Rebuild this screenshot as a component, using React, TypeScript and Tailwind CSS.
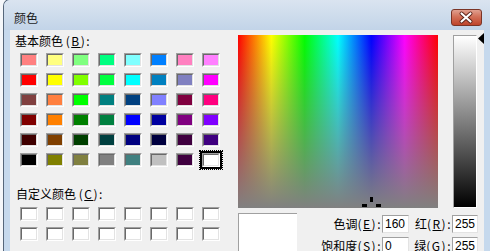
import React from "react";

const basicColors = [
  "bg-[#ff8080]", "bg-[#ffff80]", "bg-[#80ff80]", "bg-[#00ff80]", "bg-[#80ffff]", "bg-[#0080ff]", "bg-[#ff80c0]", "bg-[#ff80ff]",
  "bg-[#ff0000]", "bg-[#ffff00]", "bg-[#80ff00]", "bg-[#00ff40]", "bg-[#00ffff]", "bg-[#0080c0]", "bg-[#8080c0]", "bg-[#ff00ff]",
  "bg-[#804040]", "bg-[#ff8040]", "bg-[#00ff00]", "bg-[#008080]", "bg-[#004080]", "bg-[#8080ff]", "bg-[#800040]", "bg-[#ff0080]",
  "bg-[#800000]", "bg-[#ff8000]", "bg-[#008000]", "bg-[#008040]", "bg-[#0000ff]", "bg-[#0000a0]", "bg-[#800080]", "bg-[#8000ff]",
  "bg-[#400000]", "bg-[#804000]", "bg-[#004000]", "bg-[#004040]", "bg-[#000080]", "bg-[#000040]", "bg-[#400040]", "bg-[#400080]",
  "bg-[#000000]", "bg-[#808000]", "bg-[#808040]", "bg-[#808080]", "bg-[#408080]", "bg-[#c0c0c0]", "bg-[#400040]", "bg-[#ffffff]",
];

const Swatch = ({ color, selected }: { color: string; selected?: boolean }) => (
  <div
    className={
      selected
        ? "h-[14px] w-[18px] border border-t-[#a0a0a0] border-l-[#a0a0a0] border-r-white border-b-white ring-2 ring-black outline-1 outline-dotted outline-black outline-offset-[2px]"
        : "h-[14px] w-[18px] border border-t-[#a0a0a0] border-l-[#a0a0a0] border-r-white border-b-white"
    }
  >
    <div
      className={`h-full w-full border border-t-[#696969] border-l-[#696969] border-r-[#e3e3e3] border-b-[#e3e3e3] ${color}`}
    />
  </div>
);

const Key = ({ letter }: { letter: string }) => (
  <span className="tracking-[1.5px]">
    (<span className="underline">{letter}</span>):
  </span>
);

const Field = ({ label, letter, value }: { label: string; letter: string; value: string }) => (
  <>
    <span className="text-right">
      {label}
      <Key letter={letter} />
    </span>
    <div className="h-[18px] border border-t-[#a0a0a0] border-l-[#a0a0a0] border-r-[#e3e3e3] border-b-[#e3e3e3] bg-white pl-[2px] font-['Liberation_Sans',sans-serif] text-[12px] leading-[16px]">
      {value}
    </div>
  </>
);

export default function App() {
  return (
    <div className="h-[251px] w-[490px] overflow-hidden bg-[#f5f7fa] pl-[3px] font-['Noto_Sans_CJK_SC',sans-serif] text-[12px] leading-[14px] text-black">
      <div className="-mt-px flex h-[253px] flex-col rounded-tl-[7px] border-l border-t border-[#56677b] bg-[#c6d9ed]">
        {/* Title bar */}
        <div className="flex h-[30px] shrink-0 items-start justify-between rounded-tl-[6px] bg-[linear-gradient(to_bottom,#dae4f0,#c2d4e8)] pl-[10px] pr-[8px]">
          <span className="pt-[11px] text-[#1b1b1b]">颜色</span>
          <div className="mt-[9px] h-[17px] w-[31px] rounded-[3px] border border-[#7a3426] bg-[linear-gradient(to_bottom,#e0a090,#d27058_45%,#bf442b)]">
            <svg width="29" height="15" viewBox="0 0 29 15">
              <path d="M9.5 3.5 L18.5 11.5 M18.5 3.5 L9.5 11.5" stroke="#5a2218" strokeWidth="4" strokeLinecap="round" />
              <path d="M9.5 3.5 L18.5 11.5 M18.5 3.5 L9.5 11.5" stroke="#ffffff" strokeWidth="2.2" strokeLinecap="round" />
            </svg>
          </div>
        </div>

        {/* Client area */}
        <div className="mx-[6px] flex flex-1 bg-[#f0f0f0]">
          {/* Left column */}
          <div className="w-[228px] shrink-0 pl-[5px] pt-[4px]">
            <div>
              基本颜色 <Key letter="B" />
            </div>
            <div className="ml-[5px] mt-[5px] grid grid-cols-[repeat(8,18px)] gap-x-[8px] gap-y-[6px]">
              {basicColors.map((c, i) => (
                <Swatch key={i} color={c} selected={i === basicColors.length - 1} />
              ))}
            </div>
            <div className="ml-[1px] mt-[20px]">
              自定义颜色 <Key letter="C" />
            </div>
            <div className="ml-[5px] mt-[6px] grid grid-cols-[repeat(8,18px)] gap-x-[8px] gap-y-[6px]">
              {Array.from({ length: 16 }).map((_, i) => (
                <Swatch key={i} color="bg-white" />
              ))}
            </div>
          </div>

          {/* Right column */}
          <div className="flex flex-col pt-[5px]">
            <div className="flex items-start">
              <div className="relative h-[173px] w-[200px] overflow-hidden bg-[linear-gradient(to_bottom,rgba(128,128,128,0),#808080),linear-gradient(to_right,#ff0000,#ffff00,#00ff00,#00ffff,#0000ff,#ff00ff,#ff0000)]">
                <svg className="absolute left-[124px] top-[162px]" width="19" height="19" viewBox="0 0 19 19">
                  <rect x="8" y="0" width="3" height="5" fill="#000" />
                  <rect x="0" y="7" width="5" height="3" fill="#000" />
                  <rect x="14" y="7" width="5" height="3" fill="#000" />
                  <rect x="8" y="13" width="3" height="5" fill="#000" />
                </svg>
              </div>
              <div className="relative ml-[15px] h-[173px] w-[24px] border border-t-[#a0a0a0] border-l-[#a0a0a0] border-r-white border-b-white bg-[linear-gradient(to_bottom,#ffffff,#000000)]">
                <svg className="absolute left-[24px] top-[-3px]" width="6" height="11" viewBox="0 0 6 11">
                  <polygon points="0,5.5 6,0 6,11" fill="#000" />
                </svg>
              </div>
            </div>

            <div className="mt-[5px] flex">
              <div className="h-[40px] w-[59px] shrink-0 border-l border-t border-[#a0a0a0] bg-white" />
              <div className="grid grid-cols-[85px_27px_43px_26px] items-center gap-y-[4px] pt-[2px]">
                <Field label="色调" letter="E" value="160" />
                <Field label="红" letter="R" value="255" />
                <Field label="饱和度" letter="S" value="0" />
                <Field label="绿" letter="G" value="255" />
              </div>
            </div>
          </div>
        </div>
      </div>
    </div>
  );
}
